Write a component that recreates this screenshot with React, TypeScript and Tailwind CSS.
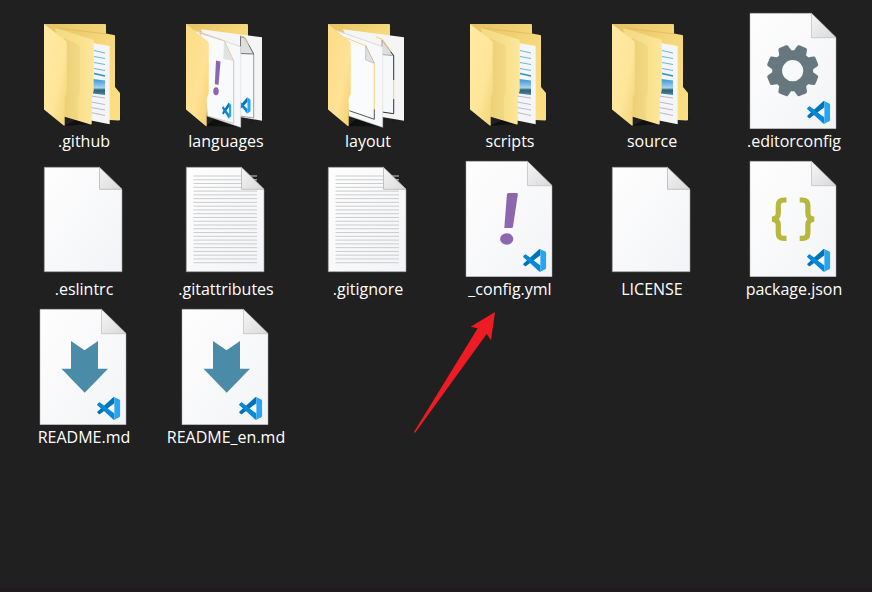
import type { ReactNode } from "react";

type Kind = "folder" | "languages" | "layout" | "gear" | "blank" | "text" | "yaml" | "json" | "markdown";

const items: { name: string; kind: Kind; marked?: boolean }[] = [
  { name: ".github", kind: "folder" },
  { name: "languages", kind: "languages" },
  { name: "layout", kind: "layout" },
  { name: "scripts", kind: "folder" },
  { name: "source", kind: "folder" },
  { name: ".editorconfig", kind: "gear" },
  { name: ".eslintrc", kind: "blank" },
  { name: ".gitattributes", kind: "text" },
  { name: ".gitignore", kind: "text" },
  { name: "_config.yml", kind: "yaml", marked: true },
  { name: "LICENSE", kind: "blank" },
  { name: "package.json", kind: "json" },
  { name: "README.md", kind: "markdown" },
  { name: "README_en.md", kind: "markdown" },
];

// Shared gradients, referenced by every icon
function Gradients() {
  return (
    <svg className="absolute size-0" aria-hidden="true">
      <defs>
        <linearGradient id="paper" x1="0" y1="0" x2="1" y2="1">
          <stop offset="0" stopColor="#fefefe" />
          <stop offset="1" stopColor="#f3f4f7" />
        </linearGradient>
        <linearGradient id="fold" x1="0" y1="0" x2="1" y2="1">
          <stop offset="0" stopColor="#f6f6f6" />
          <stop offset="1" stopColor="#d9d9d9" />
        </linearGradient>
        <linearGradient id="back" x1="0" y1="0" x2="1" y2="1">
          <stop offset="0" stopColor="#e6c063" />
          <stop offset="0.5" stopColor="#f6d87c" />
          <stop offset="1" stopColor="#fbe081" />
        </linearGradient>
        <linearGradient id="front" x1="0" y1="0" x2="1" y2="1">
          <stop offset="0" stopColor="#ffeaa5" />
          <stop offset="0.6" stopColor="#fde698" />
          <stop offset="1" stopColor="#f3d377" />
        </linearGradient>
        <linearGradient id="solid" x1="0" y1="0" x2="1" y2="1">
          <stop offset="0" stopColor="#fbdb85" />
          <stop offset="0.6" stopColor="#ffe295" />
          <stop offset="1" stopColor="#f6cf6a" />
        </linearGradient>
        <linearGradient id="middle" x1="0" y1="0" x2="1" y2="0">
          <stop offset="0" stopColor="#f5da85" />
          <stop offset="0.6" stopColor="#f8df8b" />
          <stop offset="1" stopColor="#fde79a" />
        </linearGradient>
        <linearGradient id="inner" x1="0" y1="0" x2="1" y2="0">
          <stop offset="0" stopColor="#e5c669" />
          <stop offset="1" stopColor="#eed482" />
        </linearGradient>
        <linearGradient id="photo" x1="0" y1="0" x2="0" y2="1">
          <stop offset="0" stopColor="#3b93d6" />
          <stop offset="0.55" stopColor="#a5d4ee" />
          <stop offset="0.68" stopColor="#3c6470" />
          <stop offset="0.8" stopColor="#316a86" />
          <stop offset="1" stopColor="#3d8fbe" />
        </linearGradient>
        <linearGradient id="shadow" x1="0" y1="0" x2="1" y2="0">
          <stop offset="0" stopColor="#0c0c0c" />
          <stop offset="1" stopColor="#202020" />
        </linearGradient>
      </defs>
    </svg>
  );
}

function CodeLogo({ place }: { place: string }) {
  return (
    <g transform={place}>
      <path fill="#0788d8" d="M.33 7.26 1.65 6.06a1 1 0 0 1 1.28-.06L18 17.45v6.4a1.5 1.5 0 0 1-1.5-.35L.33 8.74a1 1 0 0 1 0-1.48z" />
      <path fill="#0072b8" d="M.33 16.74l1.32 1.2a1 1 0 0 0 1.28.06L18 6.55V.15a1.5 1.5 0 0 0-1.5.35L.33 15.26a1 1 0 0 0 0 1.48z" />
      <path fill="#0788d8" d="M3.9 12 .33 8.74a1 1 0 0 1 0-1.48l1.32-1.2A1 1 0 0 1 2.93 6L10.83 12l-3.78 2.87z" />
      <path fill="#27a5f3" d="M18 .15 23.15 2.59A1.5 1.5 0 0 1 24 3.94v16.12a1.5 1.5 0 0 1-.85 1.35L18.2 23.8q-.9.4-1.7-.3Q18 24 18 22.4V1.6Q18 0 16.5.5 17.2-.1 18 .15z" />
    </g>
  );
}

function Folder() {
  return (
    <>
      <path fill="url(#shadow)" d="M64 126 78 119 92 124zM119 121l10-5-9-1z" />
      <path fill="url(#back)" d="M44 24h61q1 0 1 1v8.500l8 1.500q1 0 1 1v51l5 6v26.500q0 1-1 1L91 119 44 60z" />
      <path fill="none" stroke="#d9b65c" strokeWidth=".7" d="M56 28 106 33.800" />
      <path fill="#f4f5f7" d="M93 43l16.700 3v78.300L91 120.500z" />
      <path fill="none" stroke="#6bb5dc" d="M94 50.500l11 2.500M94 56.500l11 2M94 62.500l11 2M94 68.500l11 2" />
      <path fill="none" stroke="#2592cc" strokeWidth="1.500" d="M94 73.500l11 2.500" />
      <path fill="url(#photo)" d="M93 79l12 1.500v14.500L93 93.500z" />
      <path fill="none" stroke="#b9bcc1" d="M91 96l14 2M91 102l14 2.500M91 107.500l14 2.500M91 112.500l14 3" />
      <path fill="url(#middle)" d="M55.300 28 92.500 39.500q1.200.5 1.200 1.500v50l-2 4.500v28q0 1.200-1 1L64 116.500z" />
      <path fill="url(#inner)" opacity=".55" d="M64 38l14 6.500q2 1 2 3V93l-2 4v23L64 116z" />
      <path fill="url(#front)" d="M44 24 66 41q.7.600.7 1.500v50.500l-2 4.500v27.500q0 1-1 .5L44 109.500z" />
    </>
  );
}

function PageFolder({ kind }: { kind: "languages" | "layout" }) {
  const languages = kind === "languages";
  return (
    <>
      <path fill="url(#shadow)" d="M64 126 72 119 98 127zM105 124l20-7-8-2z" />
      <path fill="url(#back)" d="M44 24h61q1 0 1 1v40H44z" />
      <path fill="#f5f5f6" d="M59 29.300l61 8v83.400L98 117z" />
      {languages ? (
        <>
          <path fill="#f8f9fb" stroke="#777" strokeWidth=".7" d="M98 36l4 1 9.700 17v64L98 116" />
          <path fill="#dedede" stroke="#555" strokeWidth=".8" d="M98.500 36.500l4.500 1.500 8.700 16-13.200-.5z" />
          <path stroke="#f0cd73" d="M98.500 36l4 1.500 4 7" fill="none" />
          <CodeLogo place="translate(96.500 97.500) scale(.5 .66)" />
        </>
      ) : (
        <>
          <path fill="#f7f8fa" d="M98 40l11.700 15.700v58L98 112z" />
          <path fill="#dedede" stroke="#8a8a8a" strokeWidth=".7" d="M98 40l11.700 15.700-12-1.200z" />
          <path fill="none" stroke="#333" d="M98 112l11.700 1.700V99M109.700 80V55.700l-3-4" />
          <path fill="none" stroke="#f3cf72" d="M92 37l6.500 2.500 8 11M109.700 80v19" />
        </>
      )}
      <path fill="#f7f8fa" stroke="#d7d7d9" strokeWidth=".5" d="M53 30.700 98.700 46.700v80.600L65 116z" />
      {languages ? (
        <>
          <path fill="#f9fafc" stroke="#9a9a9a" strokeWidth=".5" d="M58 33.300l24 7.400L91.700 61v62.300L65.500 116z" />
          <path fill="none" stroke="#edc96e" strokeWidth=".9" d="M53 30.700l29 10L91.700 61" />
          <path fill="#e2e2e3" d="M82 41l9.500 20L81.300 59z" />
          <path fill="#8d67ad" d="M74 60.500l4.500 1-2 23.500-3.700-1z" />
          <ellipse cx="74" cy="91.300" rx="2.700" ry="4" fill="#8d67ad" />
          <CodeLogo place="translate(80.300 102.700) scale(.37 .65)" />
        </>
      ) : (
        <>
          <path fill="#fafbfc" d="M53 31l28.700 14.700 8.600 17.600v56L65 110z" />
          <path fill="none" stroke="#f1cf78" strokeWidth=".9" d="M57 36l24.700 9.700 8.600 17.600v46" />
          <path fill="none" stroke="#444" strokeWidth=".9" d="M65.300 110.700l25 8.600v-10" />
          <path fill="#e2e2e3" stroke="#aaa" strokeWidth=".6" d="M81.700 45.700l8.600 17.600-8.600-3.300z" />
        </>
      )}
      <path fill="none" stroke="#d9d9db" strokeWidth=".7" d="M53 30.700l45.700 16" />
      <path fill="url(#solid)" d="M44 24 66 41.500q.7.600.7 1.500v50.500l-2 4.500v27.500q0 1-1 .5L44 109.500z" />
    </>
  );
}

// The large sheet used for files that open in the code editor
function CodeSheet({ children }: { children: ReactNode }) {
  return (
    <>
      <path fill="url(#paper)" stroke="#aaa" strokeWidth=".5" d="M40 13.300h61.500L126 37.500V128.700H40z" />
      <path fill="url(#fold)" stroke="#bbb" strokeWidth=".7" d="M101.500 13.500 126 37.700h-24.500z" />
      {children}
      <CodeLogo place="translate(97.300 101) scale(.95)" />
    </>
  );
}

function SmallSheet({ ruled }: { ruled?: boolean }) {
  return (
    <>
      <path fill="url(#paper)" stroke="#999" strokeWidth=".6" d="M44.300 19.300h55.200L122 41.500V123.700H44.300z" />
      {ruled &&
        Array.from({ length: 24 }, (_, i) => (
          <path key={i} stroke="#cbccce" strokeWidth="1" d={`M51.500 ${28 + i * 3.77}H115`} />
        ))}
      <path fill="url(#fold)" stroke="#b5b5b5" strokeWidth=".8" d="M99.500 19.500 122 41.300H99.500z" />
    </>
  );
}

function Gear() {
  return (
    <g transform="translate(82.700 70.700)" fill="#66777d">
      {[22.5, 67.5, 112.5, 157.5, 202.5, 247.5, 292.5, 337.5].map((a) => (
        <path key={a} transform={`rotate(${a})`} d="M-7-17-5.300-24.500Q-5-26-3.500-26h7Q5-26 5.300-24.500L7-17z" />
      ))}
      <path fillRule="evenodd" d="M-20.500 0a20.500 20.500 0 1 0 41 0a20.500 20.500 0 1 0-41 0zM-10.600 0a10.600 10.600 0 1 1 21.200 0a10.600 10.600 0 1 1-21.200 0z" />
    </g>
  );
}

function Picture({ kind }: { kind: Kind }) {
  switch (kind) {
    case "folder":
      return <Folder />;
    case "languages":
    case "layout":
      return <PageFolder kind={kind} />;
    case "blank":
      return <SmallSheet />;
    case "text":
      return <SmallSheet ruled />;
    case "gear":
      return <CodeSheet><Gear /></CodeSheet>;
    case "yaml":
      return (
        <CodeSheet>
          <path fill="#8d67ad" d="M82.500 45h8q1.500 0 1.300 1.500L87 78.500q-.2 1.500-1.500 1.500h-7.200L80.900 46.500Q81 45 82.500 45z" />
          <ellipse cx="80.700" cy="91" rx="6.600" ry="5.800" fill="#8d67ad" />
        </CodeSheet>
      );
    case "json":
      return (
        <CodeSheet>
          <path
            fill="none"
            stroke="#b7b73b"
            strokeWidth="5.200"
            d="M76.500 52h-2.500q-5.700 0-5.700 5.500v7.500q0 6-6.300 6.200q6.300.2 6.300 6.200v7.500q0 5.500 5.700 5.500h2.500M89.700 52h2.500q5.700 0 5.700 5.500v7.500q0 6 6.300 6.200q-6.300.2-6.300 6.200v7.500q0 5.500-5.700 5.500h-2.500"
          />
        </CodeSheet>
      );
    case "markdown":
      return (
        <CodeSheet>
          <path fill="#4a8ba8" d="M71 45l13.500 9.300L98 45v27.700h10l-23.300 24-23.200-24H71z" />
        </CodeSheet>
      );
  }
}

export default function App() {
  return (
    <main className="flex min-h-screen flex-col border-b-4 border-[#1f1a1d] bg-[#202020] pt-[7px] pl-[13px] font-['Open_Sans','Noto_Sans',sans-serif] text-base text-white">
      <Gradients />
      <ul className="grid grid-cols-[repeat(auto-fill,142px)] gap-y-[2px]">
        {items.map((item) => (
          <li key={item.name} className="relative">
            <button type="button" className="flex w-full flex-col items-center">
              <svg viewBox="20 7 128 122" className="h-[122px] w-32" aria-hidden="true">
                <Picture kind={item.kind} />
              </svg>
              <span className="leading-6">{item.name}</span>
            </button>
            {item.marked && (
              <svg viewBox="14 12 82 122" className="pointer-events-none absolute top-[157px] -left-[25px] h-[122px] w-[82px]" aria-hidden="true">
                <path fill="#ed1c24" d="M95 12 70.700 26.700l7 1.600L14 132l1 1L86.700 34l4.300 6.300z" />
              </svg>
            )}
          </li>
        ))}
      </ul>
    </main>
  );
}
